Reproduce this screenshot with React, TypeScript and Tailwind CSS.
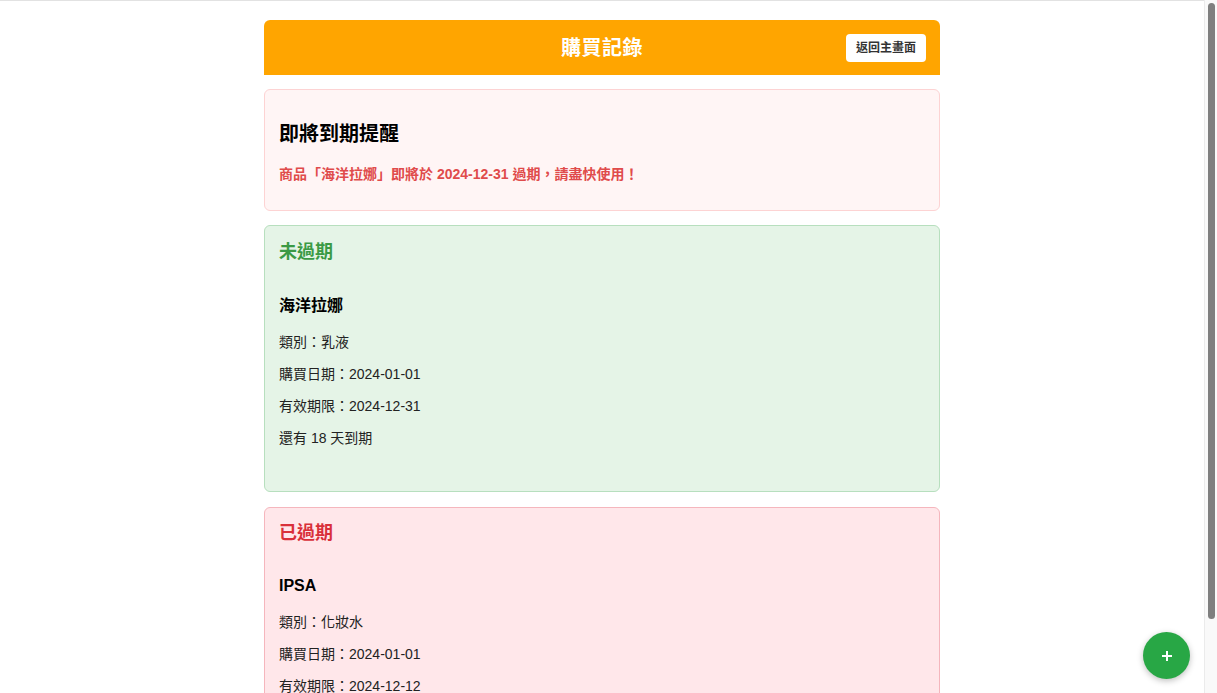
import React from 'react';

const FONT = { fontFamily: '"Liberation Sans", "Noto Sans CJK TC", Arial, sans-serif' };

interface Product {
  name: string;
  category: string;
  purchaseDate: string;
  expiryDate: string;
  note: string;
}

const valid: Product[] = [
  { name: '海洋拉娜', category: '乳液', purchaseDate: '2024-01-01', expiryDate: '2024-12-31', note: '還有 18 天到期' },
];

const expired: Product[] = [
  { name: 'IPSA', category: '化妝水', purchaseDate: '2024-01-01', expiryDate: '2024-12-12', note: '已過期 1 天' },
];

function ProductItem({ product }: { product: Product }) {
  return (
    <div className="mt-[33px] pb-[28px]">
      <h4 className="text-[16px] leading-[20px] font-bold text-black">{product.name}</h4>
      <p className="mt-4 text-[14px] leading-[20px] text-[#222]">類別：{product.category}</p>
      <p className="mt-3 text-[14px] leading-[20px] text-[#222]">購買日期：{product.purchaseDate}</p>
      <p className="mt-3 text-[14px] leading-[20px] text-[#222]">有效期限：{product.expiryDate}</p>
      <p className="mt-3 text-[14px] leading-[20px] text-[#222]">{product.note}</p>
    </div>
  );
}

export default function App() {
  return (
    <div style={FONT} className="min-h-screen bg-white border-t border-[#e2e2e2]">
      <div className="mr-[13px]">
        <div className="max-w-[676px] mx-auto pt-[19px] pb-5">
          <header className="relative h-[55px] bg-[#ffa500] rounded-t-md flex items-center justify-center">
            <h1 className="text-[20px] font-bold text-white tracking-wide">購買記錄</h1>
            <button className="absolute right-[14px] top-[14px] h-[28px] w-[80px] bg-white rounded text-[12px] font-bold text-[#333]">
              返回主畫面
            </button>
          </header>

          <section className="mt-[14px] bg-[#fff5f5] border border-[#fdd3d3] rounded-md px-[14px] pt-[32px] pb-[26px]">
            <h2 className="text-[20px] leading-[24px] font-bold text-black">即將到期提醒</h2>
            <p className="mt-[18px] text-[14px] leading-[20px] font-bold text-[#e04b4b]">
              商品「海洋拉娜」即將於 2024-12-31 過期，請盡快使用！
            </p>
          </section>

          <section className="mt-[14px] bg-[#e5f4e7] border border-[#b7dfbe] rounded-md px-[14px] pt-[15px] pb-[15px]">
            <h3 className="text-[18px] leading-[22px] font-bold text-[#3b9a45]">未過期</h3>
            {valid.map((p) => (
              <ProductItem key={p.name} product={p} />
            ))}
          </section>

          <section className="mt-[15px] bg-[#ffe7ea] border border-[#f5b6bd] rounded-md px-[14px] pt-[14px] pb-[15px]">
            <h3 className="text-[18px] leading-[22px] font-bold text-[#d9303a] mb-[-1px]">已過期</h3>
            {expired.map((p) => (
              <ProductItem key={p.name} product={p} />
            ))}
          </section>
        </div>
      </div>

      {/* scrollbar */}
      <div className="fixed right-0 top-0 h-screen w-[13px] bg-[#f9f9f9] border-l border-[#ebebeb]">
        <div className="absolute top-[3px] left-[3px] w-[7px] h-[616px] rounded-full bg-[#7f7f7f]" />
      </div>

      <button className="fixed right-[27px] bottom-[14px] w-[47px] h-[47px] rounded-full bg-[#28a745] flex items-center justify-center shadow-[0_2px_6px_rgba(0,0,0,0.25)]">
        <svg width="12" height="12" viewBox="0 0 12 12" fill="none" stroke="white" strokeWidth="2">
          <path d="M6 1v10M1 6h10" />
        </svg>
      </button>
    </div>
  );
}
